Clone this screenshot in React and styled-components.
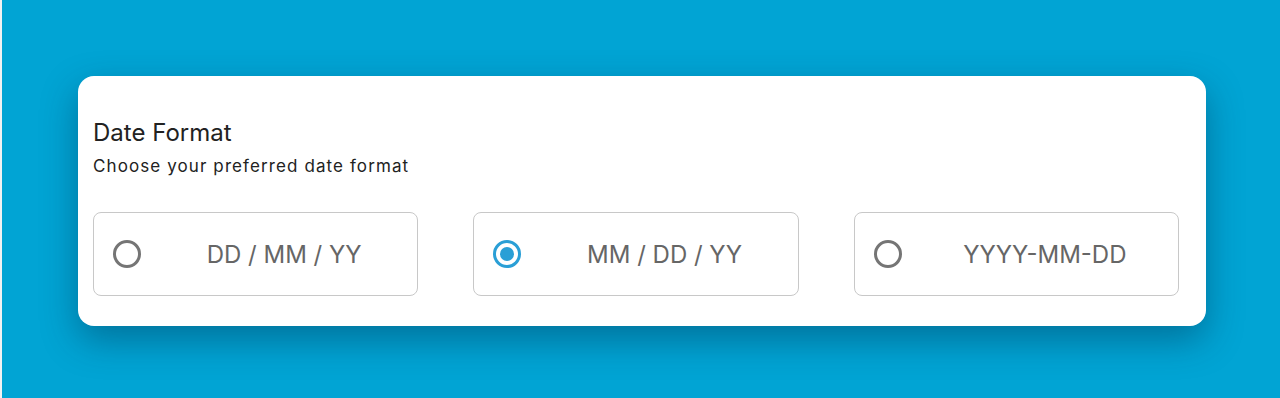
import React, { useState } from "react";
import styled, { createGlobalStyle } from "styled-components";

const Global = createGlobalStyle`
  html, body { margin: 0; padding: 0; background: #f2f2f2; }
  body { font-family: Inter, "Noto Sans", sans-serif; }
  * { box-sizing: border-box; }
`;

const Stage = styled.div`
  margin-left: 2px;
  height: 398px;
  background: #01a4d4;
  display: flex;
  align-items: flex-start;
  justify-content: center;
  padding-top: 76px;
  padding-left: 2px;
`;

const Card = styled.div`
  width: 1128px;
  height: 250px;
  background: #fff;
  border-radius: 16px;
  box-shadow: 0 14px 36px rgba(0, 40, 70, 0.4);
  padding: 42px 27px 30px 15px;
  display: flex;
  flex-direction: column;
`;

const Title = styled.h2`
  margin: 0;
  font-size: 24px;
  font-weight: 400;
  color: #222;
  line-height: 30px;
`;

const Subtitle = styled.p`
  margin: 7px 0 0;
  font-size: 17px;
  letter-spacing: 1.1px;
  color: #222;
  line-height: 22px;
`;

const Options = styled.div`
  margin-top: 35px;
  display: grid;
  grid-template-columns: repeat(3, 1fr);
  column-gap: 55px;
`;

const Option = styled.label`
  height: 84px;
  border: 1px solid #c8c8c8;
  border-radius: 8px;
  display: flex;
  align-items: center;
  padding: 0 20px 0 19px;
  cursor: pointer;
`;

const Radio = styled.span`
  width: 28px;
  height: 28px;
  border-radius: 50%;
  border: 3px solid ${(p) => (p.$checked ? "#2a9fd6" : "#757575")};
  display: flex;
  align-items: center;
  justify-content: center;
  flex: none;
  &::after {
    content: "";
    width: 14px;
    height: 14px;
    border-radius: 50%;
    background: #2a9fd6;
    display: ${(p) => (p.$checked ? "block" : "none")};
  }
`;

const Label = styled.span`
  flex: 1;
  text-align: center;
  font-size: 24px;
  color: #666;
  padding-left: 30px;
`;

const formats = ["DD / MM / YY", "MM / DD / YY", "YYYY-MM-DD"];

export default function App() {
  const [sel, setSel] = useState(1);
  return (
    <>
      <Global />
      <Stage>
        <Card>
          <Title>Date Format</Title>
          <Subtitle>Choose your preferred date format</Subtitle>
          <Options>
            {formats.map((f, i) => (
              <Option key={f} onClick={() => setSel(i)}>
                <Radio $checked={sel === i} />
                <Label>{f}</Label>
              </Option>
            ))}
          </Options>
        </Card>
      </Stage>
    </>
  );
}
